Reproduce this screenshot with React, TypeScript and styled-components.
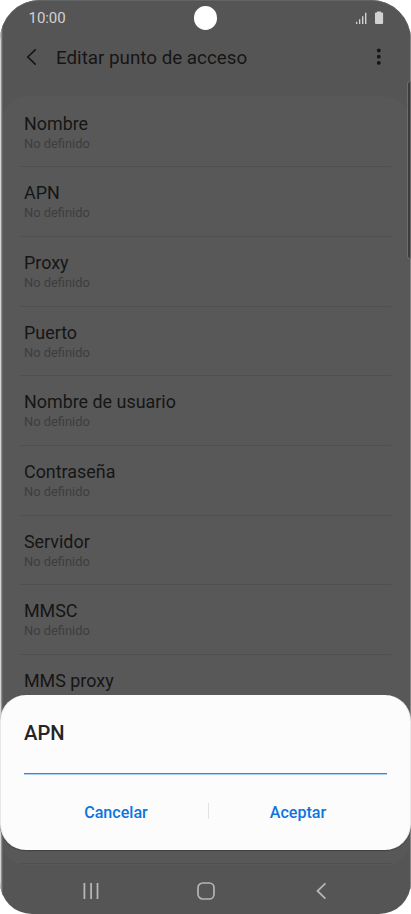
import React from "react";
import styled, { createGlobalStyle } from "styled-components";

const GlobalStyle = createGlobalStyle`
  * { box-sizing: border-box; }
  body { margin: 0; background: #fff; font-family: Roboto, "Liberation Sans", sans-serif; overflow: hidden; }
`;

const Phone = styled.main`
  position: relative;
  display: flex;
  flex-direction: column;
  width: 411px;
  height: 914px;
  overflow: hidden;
  border-radius: 40px 40px 32px 32px;
  background: #555;
  box-shadow: inset 0 1px 0 #626464;
`;

const StatusBar = styled.div`
  display: flex;
  align-items: center;
  justify-content: space-between;
  flex: none;
  height: 36px;
  padding: 0 27px 0 28.5px;
  color: #d2d2d2;
`;

const Clock = styled.time`
  font-size: 15px;
  line-height: 18px;
  letter-spacing: -0.05px;
`;

const StatusIcons = styled.svg`
  display: block;
  width: 28px;
  height: 14px;
`;

const Camera = styled.div`
  position: absolute;
  left: 194px;
  top: 6px;
  width: 23px;
  height: 23.5px;
  border-radius: 50%;
  background: #fff;
`;

const Header = styled.header`
  display: flex;
  align-items: center;
  flex: none;
  height: 61px;
  padding: 0 25px 20px 26px;
  color: #151515;
`;

const HeaderIcon = styled.svg`
  display: block;
  flex: none;
  width: 12px;
  height: 18px;
`;

const PageTitle = styled.h1`
  flex: 1;
  margin: 0 0 0 18px;
  padding-top: 2px;
  font-size: 18.8px;
  line-height: 24px;
  font-weight: 400;
`;

const List = styled.section`
  flex: none;
  height: 768px;
  margin: 0 1px 0 2px;
  padding-top: 0.6px;
  border-radius: 26px;
  background: #585858;
  box-shadow: 0 0 0 0.5px #5b5b5b;
  overflow: hidden;
`;

const Row = styled.div`
  height: 69.67px;
  margin: 0 19px 0 18px;
  padding: 14.2px 4px 0;
  border-bottom: 1px solid #505050;
`;

const Label = styled.div`
  font-size: 17.9px;
  line-height: 23px;
  color: #151515;
`;

const Value = styled.div`
  font-size: 12.9px;
  line-height: 17px;
  color: #3d3d3d;
`;

const LeftEdge = styled.div`
  position: absolute;
  left: 0;
  top: 0;
  bottom: 0;
  width: 3px;
  background: linear-gradient(to right, #d3d5d5 0 1px, #8e9090 1px 2px, #656767 2px 3px);
`;

const RightEdge = styled.div`
  position: absolute;
  right: 0;
  top: 0;
  bottom: 0;
  width: 1px;
  background: #858787;
`;

const ScrollThumb = styled.div`
  position: absolute;
  top: 82px;
  right: 1px;
  width: 2px;
  height: 176px;
  border-radius: 2px 0 0 2px;
  background: #3c3c3c;
  box-shadow: 0 0 0 1px #6c6c6c;
`;

const Dialog = styled.section`
  position: absolute;
  left: 0;
  right: 0;
  top: 694.5px;
  height: 155.5px;
  display: flex;
  flex-direction: column;
  padding: 25px 23px 0;
  border-radius: 26px;
  background: #fcfcfc;
  border: solid #e8e8e8;
  border-width: 0 1px;
  box-shadow: 0 1px 1px #414141;
`;

const DialogTitle = styled.h2`
  margin: 0;
  font-size: 20.2px;
  line-height: 26px;
  font-weight: 500;
  color: #252525;
`;

const Field = styled.div`
  flex: none;
  height: 29.5px;
  background: linear-gradient(#3188dc, #3188dc) left bottom 1px / 100% 1px no-repeat,
    linear-gradient(#a9d0f5, #a9d0f5) left bottom / 100% 1px no-repeat;
`;

const Actions = styled.div`
  display: grid;
  grid-template-columns: 184px 1px 178px;
  align-items: center;
  height: 76px;
`;

const Separator = styled.div`
  height: 16px;
  margin-top: -3px;
  background: #e2e2e2;
`;

const Action = styled.button`
  justify-self: center;
  padding: 0;
  border: 0;
  background: none;
  font: 500 16.1px/20px Roboto, sans-serif;
  color: #0b75e0;
`;

const NavBar = styled.nav`
  flex: none;
  height: 49px;
  display: flex;
  align-items: center;
  justify-content: space-between;
  padding: 3px 81px 0 82px;
`;

const NavIcon = styled.svg`
  display: block;
  width: 18px;
  height: 18px;
`;

const fields = [
  "Nombre", "APN", "Proxy", "Puerto", "Nombre de usuario", "Contraseña",
  "Servidor", "MMSC",
];

export default function App() {
  return (
    <>
      <GlobalStyle />
      <Phone>
        <StatusBar>
          <Clock>10:00</Clock>
          <StatusIcons viewBox="0 0 28 14" fill="currentColor">
            <path d="M0 10.8h1.3V13H0zM3 8.3h1.3V13H3zM6 5.2h1.4V13H6zM9 1.7h1.4V13H9z" />
            <path d="M21 .5h4v1h1.1q1 0 1 1v9.5q0 1-1 1H20q-1 0-1-1V2.5q0-1 1-1h1z" />
          </StatusIcons>
        </StatusBar>
        <Header>
          <HeaderIcon viewBox="0 0 12 18" fill="none" stroke="currentColor" strokeWidth="1.6">
            <path d="M9.7 1.4 1.8 9l7.9 7.6" />
          </HeaderIcon>
          <PageTitle>Editar punto de acceso</PageTitle>
          <HeaderIcon viewBox="0 0 12 18" fill="currentColor">
            <circle cx="4.8" cy="2.5" r="1.9" />
            <circle cx="4.8" cy="8.7" r="1.9" />
            <circle cx="4.8" cy="14.9" r="1.9" />
          </HeaderIcon>
        </Header>
        <List>
          {fields.map((name) => (
            <Row key={name}>
              <Label>{name}</Label>
              <Value>No definido</Value>
            </Row>
          ))}
          <Row>
            <Label>MMS proxy</Label>
          </Row>
          <Row />
          <Row />
        </List>
        <NavBar>
          <NavIcon viewBox="0 0 18 18" fill="none" stroke="#b5b5b5" strokeWidth="1.8">
            <path d="M2.4 1v16M9.1 1v16M15.5 1v16" />
          </NavIcon>
          <NavIcon viewBox="0 0 18 18" fill="none" stroke="#b5b5b5" strokeWidth="1.7">
            <rect x="1" y="1" width="16" height="16" rx="4.8" />
          </NavIcon>
          <NavIcon viewBox="0 0 18 18" fill="none" stroke="#b5b5b5" strokeWidth="1.8">
            <path d="M13.4 1.3 5.5 9l7.9 7.7" />
          </NavIcon>
        </NavBar>
        <Camera />
        <LeftEdge />
        <RightEdge />
        <ScrollThumb />
        <Dialog role="dialog" aria-label="APN">
          <DialogTitle>APN</DialogTitle>
          <Field />
          <Actions>
            <Action>Cancelar</Action>
            <Separator />
            <Action>Aceptar</Action>
          </Actions>
        </Dialog>
      </Phone>
    </>
  );
}
